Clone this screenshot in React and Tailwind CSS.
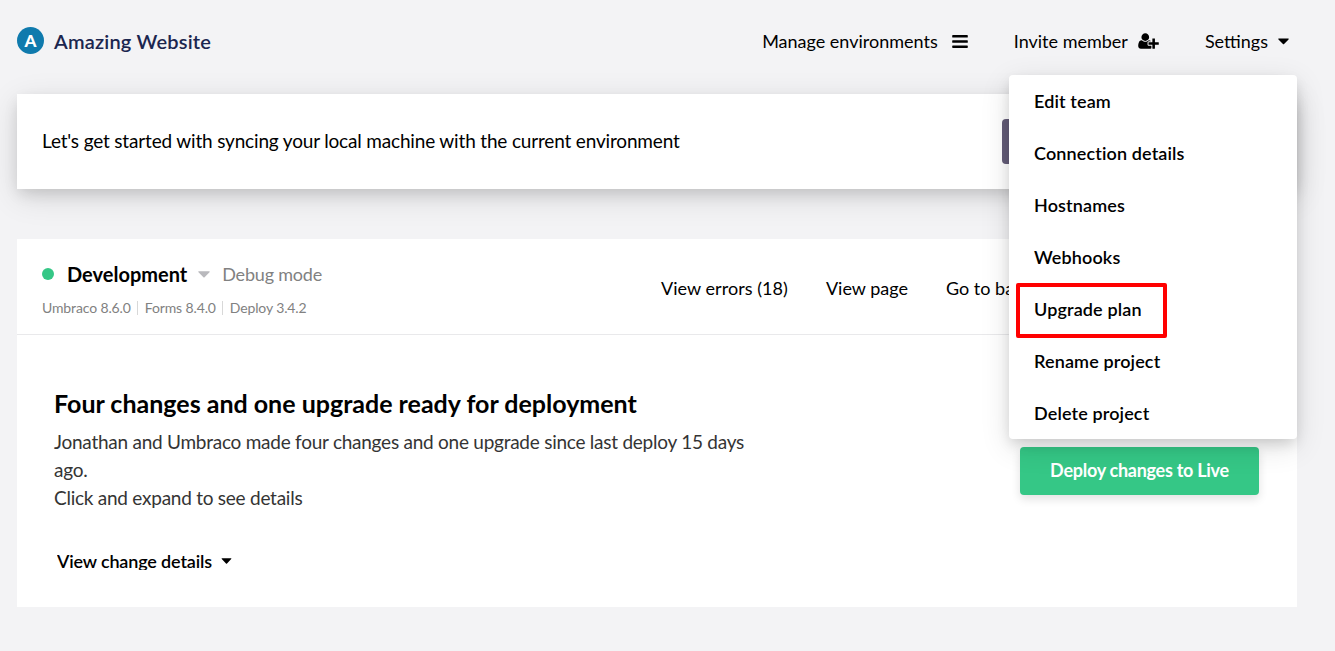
const menuItems = [
  "Edit team",
  "Connection details",
  "Hostnames",
  "Webhooks",
  "Upgrade plan",
  "Rename project",
  "Delete project",
];

const versions = ["Umbraco 8.6.0", "Forms 8.4.0", "Deploy 3.4.2"];

function Caret({ className }) {
  return (
    <svg viewBox="0 0 12 7" className={className} fill="currentColor" aria-hidden="true">
      <path d="M1 .3h10c.7 0 .9.6.5 1L6.6 6.3c-.4.4-.8.4-1.2 0L.5 1.3C.1.9.3.3 1 .3z" />
    </svg>
  );
}

function BarsIcon({ className }) {
  return (
    <svg viewBox="0 0 1536 1280" className={className} fill="currentColor" aria-hidden="true">
      <rect width="1536" height="256" rx="64" />
      <rect y="512" width="1536" height="256" rx="64" />
      <rect y="1024" width="1536" height="256" rx="64" />
    </svg>
  );
}

function UserPlusIcon({ className }) {
  return (
    <svg viewBox="0 0 2048 1792" className={className} fill="currentColor" aria-hidden="true">
      <path d="M704 896q-159 0-271.5-112.5T320 512t112.5-271.5T704 128t271.5 112.5T1088 512 975.5 783.5 704 896zm960 128h352q13 0 22.5 9.5t9.5 22.5v192q0 13-9.5 22.5t-22.5 9.5h-352v352q0 13-9.5 22.5t-22.5 9.5h-192q-13 0-22.5-9.5t-9.5-22.5v-352h-352q-13 0-22.5-9.5t-9.5-22.5v-192q0-13 9.5-22.5t22.5-9.5h352V672q0-13 9.5-22.5t22.5-9.5h192q13 0 22.5 9.5t9.5 22.5v352zm-736 224q0 52 38 90t90 38h256v238q-68 50-171 50H267q-121 0-194-69T0 1405q0-53 3.5-103.5t14-109T44 1084t43-97.5 62-81 85.5-53.5T346 832q19 0 39 17 79 61 154.5 91.5T704 971t164.5-30.5T1023 849q20-17 39-17 132 0 217 96h-223q-52 0-90 38t-38 90v192z" />
    </svg>
  );
}

function SettingsMenu() {
  return (
    <ul className="absolute top-[47px] right-0 z-10 h-[364px] w-72 rounded bg-white shadow-[0_8px_30px_rgba(0,0,0,0.12),0_6px_14px_-2px_rgba(0,0,0,0.15)]">
      {menuItems.map((label) => (
        <li
          key={label}
          className="relative flex h-[52px] items-center pt-px pl-[25px] text-[18px] font-semibold tracking-[0.13px]"
        >
          {label}
          {label === "Upgrade plan" && (
            <span className="absolute top-0 left-[7px] h-[55px] w-[151px] rounded-[2px] border-4 border-[#ff0000]" />
          )}
        </li>
      ))}
    </ul>
  );
}

function Header() {
  return (
    <header className="flex h-[28px] items-center justify-between">
      <div className="mb-px flex items-center">
        <span className="flex size-[27px] items-center justify-center rounded-full bg-[#0f7aad] text-[17px] font-black text-white">
          A
        </span>
        <h1 className="ml-[10px] text-[20px] font-semibold tracking-[0.2px] text-[#1b264f]">Amazing Website</h1>
      </div>
      <nav className="relative flex items-center pr-[8px] text-[18px]">
        <a className="flex items-center">
          Manage environments
          <BarsIcon className="ml-[14px] h-[13px] w-[16px]" />
        </a>
        <a className="ml-[46px] flex items-center">
          Invite member
          <UserPlusIcon className="ml-[10px] h-[18px] w-[21px]" />
        </a>
        <a className="ml-[46px] flex items-center">
          Settings
          <Caret className="ml-[10px] h-[7px] w-[11px]" />
        </a>
        <SettingsMenu />
      </nav>
    </header>
  );
}

function SyncBanner() {
  return (
    <section className="mt-[39px] flex h-[95px] items-center justify-between bg-white px-[25px] shadow-[0_8px_30px_rgba(0,0,0,0.12),0_6px_14px_-2px_rgba(0,0,0,0.13)]">
      <p className="text-[19px] tracking-[-0.17px]">
        Let's get started with syncing your local machine with the current environment
      </p>
      <span className="h-[45px] w-[270px] rounded bg-[#645c78]" />
    </section>
  );
}

function Environment() {
  return (
    <section className="mt-[50px] h-[368px] bg-white">
      <div className="flex h-[96px] justify-between border-b border-[#e9e9eb] pl-[25px]">
        <div className="pt-[20px]">
          <div className="flex h-[30px] items-center">
            <span className="size-[12px] rounded-full bg-[#35c786]" />
            <h2 className="ml-[13px] text-[20px] font-bold">Development</h2>
            <Caret className="ml-[11px] h-[7px] w-[12px] text-[#b9b9bd]" />
            <span className="ml-[12px] text-[18px] tracking-[-0.2px] text-[#818181]">Debug mode</span>
          </div>
          <div className="mt-[9px] flex h-[20px] items-center text-[14px] tracking-[-0.13px] text-[#818181]">
            {versions.map((v, i) => (
              <span
                key={v}
                className={i ? "border-l border-[#d8d8d8] pl-[7px] leading-[14px]" : "leading-[14px]"}
              >
                <span className={i < 2 ? "pr-[6px]" : ""}>{v}</span>
              </span>
            ))}
          </div>
        </div>
        <nav className="flex w-[636px] items-center gap-[38px] pt-[4px] text-[18px] whitespace-nowrap">
          <a className="tracking-[0.05px]">View errors (18)</a>
          <a>View page</a>
          <a>Go to ba</a>
        </nav>
      </div>
      <div className="flex justify-between pr-[38px] pl-[37px]">
        <div className="w-[700px]">
          <h3 className="mt-[51px] text-[25px] leading-[34px] font-bold">
            Four changes and one upgrade ready for deployment
          </h3>
          <p className="mt-[8px] text-[19px] leading-[28px] tracking-[-0.25px] text-[#343434]">
            Jonathan and Umbraco made four changes and one upgrade since last deploy 15 days
            <br />
            ago.
            <br />
            Click and expand to see details
          </p>
          <button className="mt-[40px] ml-[3px] flex h-[18px] items-center overflow-hidden text-[18px] leading-[18px] font-semibold tracking-[-0.15px]">
            <span>View change details</span>
            <Caret className="ml-[9px] h-[6px] w-[11px]" />
          </button>
        </div>
        <button className="mt-[112px] h-[48px] w-[239px] rounded bg-[#35c786] pb-px text-[18px] font-bold tracking-[-0.27px] text-white shadow-[0_4px_10px_rgba(0,0,0,0.12)]">
          Deploy changes to Live
        </button>
      </div>
    </section>
  );
}

export default function App() {
  return (
    <main className="h-[651px] overflow-hidden bg-[#f3f3f5] pt-[27px] pr-[38px] pl-[17px] font-['Lato',sans-serif] whitespace-nowrap text-black">
      <Header />
      <SyncBanner />
      <Environment />
    </main>
  );
}
